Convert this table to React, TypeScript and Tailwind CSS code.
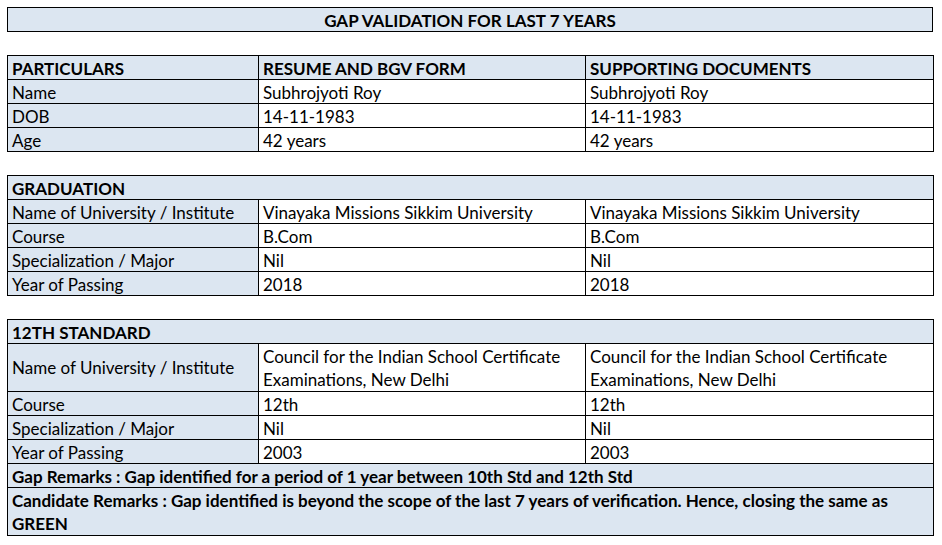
import React from 'react';

const blue = 'bg-[#dce6f1]';
const cell = 'border border-black px-[4px] h-[24px] leading-[21px] pt-[2px] align-middle';
const tallCell = 'border border-black px-[4px] h-[48px] leading-[23px] align-middle';

type Row = { label: string; resume: React.ReactNode; docs: React.ReactNode; tall?: boolean };

const personal: Row[] = [
  { label: 'Name', resume: 'Subhrojyoti Roy', docs: 'Subhrojyoti Roy' },
  { label: 'DOB', resume: '14-11-1983', docs: '14-11-1983' },
  { label: 'Age', resume: '42 years', docs: '42 years' },
];

const graduation: Row[] = [
  {
    label: 'Name of University / Institute',
    resume: 'Vinayaka Missions Sikkim University',
    docs: 'Vinayaka Missions Sikkim University',
  },
  { label: 'Course', resume: 'B.Com', docs: 'B.Com' },
  { label: 'Specialization / Major', resume: 'Nil', docs: 'Nil' },
  { label: 'Year of Passing', resume: '2018', docs: '2018' },
];

const council = (
  <>
    Council for the Indian School Certificate
    <br />
    Examinations, New Delhi
  </>
);

const twelfth: Row[] = [
  { label: 'Name of University / Institute', resume: council, docs: council, tall: true },
  { label: 'Course', resume: '12th', docs: '12th' },
  { label: 'Specialization / Major', resume: 'Nil', docs: 'Nil' },
  { label: 'Year of Passing', resume: '2003', docs: '2003' },
];

const Cols = () => (
  <colgroup>
    <col className="w-[251px]" />
    <col className="w-[327px]" />
    <col className="w-[348px]" />
  </colgroup>
);

const Rows = ({ rows }: { rows: Row[] }) => (
  <>
    {rows.map((r, i) => {
      const c = r.tall ? tallCell : cell;
      return (
        <tr key={i}>
          <td className={`${c} ${blue}`}>{r.label}</td>
          <td className={`${c} bg-white`}>{r.resume}</td>
          <td className={`${c} bg-white`}>{r.docs}</td>
        </tr>
      );
    })}
  </>
);

const SectionHead = ({ title }: { title: string }) => (
  <tr>
    <td colSpan={3} className={`${cell} ${blue} font-bold`}>
      {title}
    </td>
  </tr>
);

export default function App() {
  return (
    <div
      className="w-[942px] h-[545px] bg-white text-black text-[17px] pt-[7px] pl-[7px] flex flex-col"
      style={{ fontFamily: 'Lato, "Open Sans", sans-serif' }}
    >
      <table className="w-[926px] table-fixed border-collapse">
        <tbody>
          <tr>
            <td className={`${cell} ${blue} font-bold text-center`}>
              GAP VALIDATION FOR LAST 7 YEARS
            </td>
          </tr>
        </tbody>
      </table>

      <table className="w-[926px] table-fixed border-collapse mt-[23px]">
        <Cols />
        <tbody>
          <tr className={`${blue} font-bold`}>
            <td className={cell}>PARTICULARS</td>
            <td className={cell}>RESUME AND BGV FORM</td>
            <td className={cell}>SUPPORTING DOCUMENTS</td>
          </tr>
          <Rows rows={personal} />
        </tbody>
      </table>

      <table className="w-[926px] table-fixed border-collapse mt-[23px]">
        <Cols />
        <tbody>
          <SectionHead title="GRADUATION" />
          <Rows rows={graduation} />
        </tbody>
      </table>

      <table className="w-[926px] table-fixed border-collapse mt-[23px]">
        <Cols />
        <tbody>
          <SectionHead title="12TH STANDARD" />
          <Rows rows={twelfth} />
          <SectionHead title="Gap Remarks : Gap identified for a period of 1 year between 10th Std and 12th Std" />
          <tr>
            <td colSpan={3} className={`${tallCell} ${blue} font-bold`}>
              Candidate Remarks : Gap identified is beyond the scope of the last 7 years of verification. Hence, closing the same as
              <br />
              GREEN
            </td>
          </tr>
        </tbody>
      </table>
    </div>
  );
}
